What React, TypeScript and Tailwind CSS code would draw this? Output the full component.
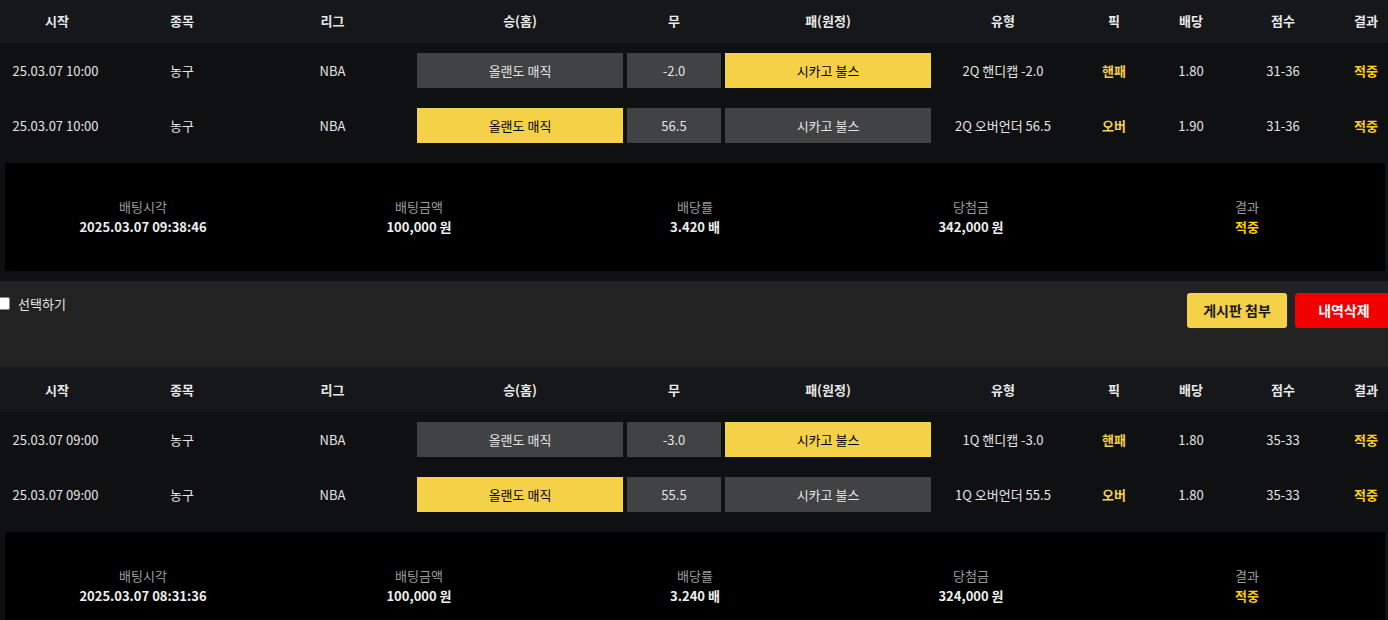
const FONT = "font-['Noto_Sans_CJK_KR','Noto_Sans',sans-serif]";

type Bet = {
  time: string;
  home: string;
  mid: string;
  away: string;
  pickSide: 'home' | 'away';
  type: string;
  pick: string;
  odds: string;
  score: string;
};

type Slip = {
  rows: Bet[];
  betTime: string;
  amount: string;
  rate: string;
  win: string;
};

const SLIPS: Slip[] = [
  {
    rows: [
      { time: '25.03.07 10:00', home: '올랜도 매직', mid: '-2.0', away: '시카고 불스', pickSide: 'away', type: '2Q 핸디캡 -2.0', pick: '핸패', odds: '1.80', score: '31-36' },
      { time: '25.03.07 10:00', home: '올랜도 매직', mid: '56.5', away: '시카고 불스', pickSide: 'home', type: '2Q 오버언더 56.5', pick: '오버', odds: '1.90', score: '31-36' },
    ],
    betTime: '2025.03.07 09:38:46',
    amount: '100,000 원',
    rate: '3.420 배',
    win: '342,000 원',
  },
  {
    rows: [
      { time: '25.03.07 09:00', home: '올랜도 매직', mid: '-3.0', away: '시카고 불스', pickSide: 'away', type: '1Q 핸디캡 -3.0', pick: '핸패', odds: '1.80', score: '35-33' },
      { time: '25.03.07 09:00', home: '올랜도 매직', mid: '55.5', away: '시카고 불스', pickSide: 'home', type: '1Q 오버언더 55.5', pick: '오버', odds: '1.80', score: '35-33' },
    ],
    betTime: '2025.03.07 08:31:36',
    amount: '100,000 원',
    rate: '3.240 배',
    win: '324,000 원',
  },
];

const COLS = 'grid grid-cols-[114px_136px_165px_210px_98px_210px_140px_82px_72px_112px_54px]';
const HEADERS = ['시작', '종목', '리그', '승(홈)', '무', '패(원정)', '유형', '픽', '배당', '점수', '결과'];

const Pill = ({ active, children }: { active?: boolean; children: React.ReactNode }) => (
  <div className="px-[2px]">
    <div
      className={
        active
          ? 'flex h-[35px] items-center justify-center bg-[#f4d147] text-black'
          : 'flex h-[35px] items-center justify-center bg-[#414244] text-[#e4e4e4]'
      }
    >
      {children}
    </div>
  </div>
);

const SlipBlock = ({ slip }: { slip: Slip }) => (
  <div className="bg-[#0f1012]">
    <div className={`${COLS} h-[45px] items-center bg-[#16171a] text-center text-[13px] font-bold text-[#e8e8e8]`}>
      {HEADERS.map((h) => (
        <div key={h}>{h}</div>
      ))}
    </div>
    {slip.rows.map((r, i) => (
      <div key={i} className={`${COLS} h-[55px] items-center text-center text-[13px] text-[#e4e4e4]`}>
        <div className="pr-[3px]">{r.time}</div>
        <div>농구</div>
        <div>NBA</div>
        <Pill active={r.pickSide === 'home'}>{r.home}</Pill>
        <Pill>{r.mid}</Pill>
        <Pill active={r.pickSide === 'away'}>{r.away}</Pill>
        <div>{r.type}</div>
        <div className="font-bold text-[#f4d147]">{r.pick}</div>
        <div>{r.odds}</div>
        <div>{r.score}</div>
        <div className="font-bold text-[#ffd200]">적중</div>
      </div>
    ))}
    <div className="pt-[10px] pr-[8px] pb-[10px] pl-[5px]">
      <div className="grid h-[108px] grid-cols-5 items-center bg-black text-center text-[13px]">
        {[
          ['배팅시각', slip.betTime],
          ['배팅금액', slip.amount],
          ['배당률', slip.rate],
          ['당첨금', slip.win],
        ].map(([label, value]) => (
          <div key={label} className="flex flex-col leading-[20px]">
            <span className="text-[#9c9c9c]">{label}</span>
            <span className="font-bold text-[#f0f0f0]">{value}</span>
          </div>
        ))}
        <div className="flex flex-col leading-[20px]">
          <span className="text-[#9c9c9c]">결과</span>
          <span className="font-bold text-[#ffd200]">적중</span>
        </div>
      </div>
    </div>
  </div>
);

export default function App() {
  return (
    <div className={`${FONT} h-[620px] w-[1388px] overflow-hidden bg-[#0f1012]`}>
      <div className="-mt-[2px] w-[1393px]">
        <SlipBlock slip={SLIPS[0]} />
        <div className="flex h-[86px] items-start justify-between bg-[#222222]">
          <label className="mt-[13px] flex items-center gap-[8px] text-[13px] text-[#e4e4e4]">
            <span className="-ml-[3px] h-[13px] w-[13px] rounded-[2px] border border-[#8a8a8a] bg-white" />
            선택하기
          </label>
          <div className="mt-[12px] flex gap-[8px]">
            <button className="h-[35px] w-[100px] rounded-[3px] bg-[#f4d147] text-[14px] font-bold text-[#1a1a1a]">
              게시판 첨부
            </button>
            <button className="h-[35px] w-[98px] rounded-[3px] bg-[#f00000] text-[14px] font-bold text-white">
              내역삭제
            </button>
          </div>
        </div>
        <SlipBlock slip={SLIPS[1]} />
      </div>
    </div>
  );
}
